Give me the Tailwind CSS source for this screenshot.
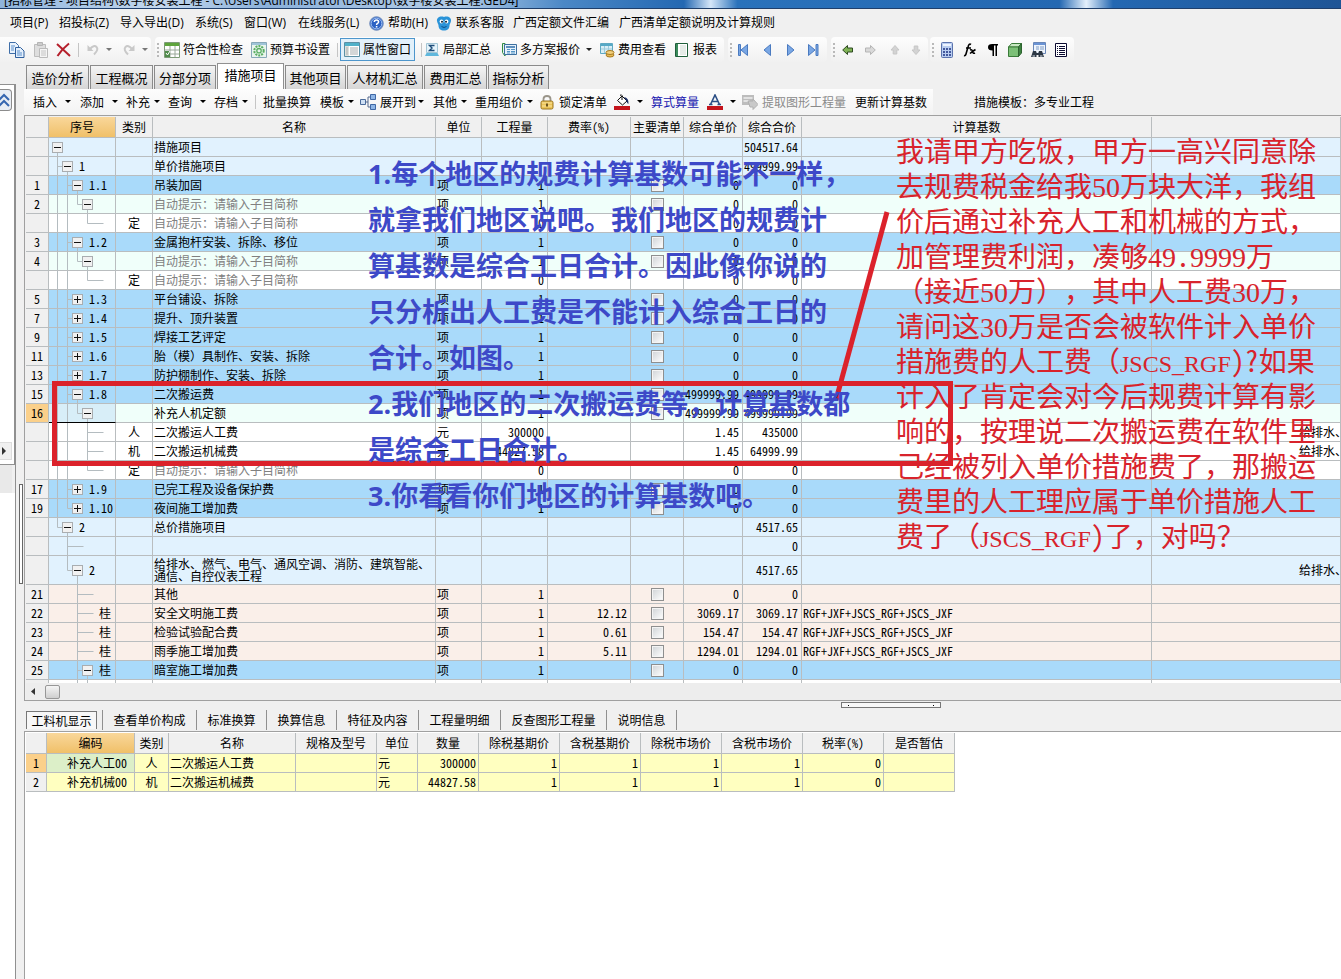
<!DOCTYPE html>
<html lang="zh-CN">
<head>
<meta charset="utf-8">
<title>招标管理 - 措施项目</title>
<script src="https://cdn.jsdelivr.net/npm/@tailwindcss/browser@4"></script>
</head>
<body class="relative flex h-screen flex-col overflow-hidden bg-[#f0f0f0] font-['Open_Sans','Noto_Sans_CJK_SC',sans-serif] text-xs text-black [text-spacing-trim:space-all]">

<!-- title bar -->
<header class="flex h-[9px] shrink-0 items-end overflow-hidden border-b border-[#1f3f6b] bg-[linear-gradient(90deg,#8fb4dc_0%,#c3d8ee_12%,#8ab0da_20%,#b4cde8_34%,#4b88c6_42%,#2468b2_51%,#d5e6f8_53%,#2a72bb_55%,#2468b2_79%,#e4f0fc_81%,#2468b2_83%,#1f5596_100%)] pl-1">
  <h1 class="whitespace-nowrap text-xs leading-[14px]">[招标管理 - 项目结构\数字楼安装工程 - C:\Users\Administrator\Desktop\数字楼安装工程.GED4]</h1>
</header>

<!-- menu -->
<nav class="flex h-7 shrink-0 items-center whitespace-nowrap pl-[10px] leading-4" aria-label="主菜单">
  <button class="w-[49px] text-left">项目(P)</button>
  <button class="w-[61px] text-left">招投标(Z)</button>
  <button class="w-[75px] text-left">导入导出(D)</button>
  <button class="w-[49px] text-left">系统(S)</button>
  <button class="w-[54px] text-left">窗口(W)</button>
  <button class="w-[71px] text-left">在线服务(L)</button>
  <button class="flex w-[67px] items-center gap-1"><svg class="size-[15px]" viewBox="0 0 15 15"><circle cx="7.5" cy="7.5" r="6.8" fill="#2c62c4" stroke="#7a93bd"/><circle cx="7.5" cy="7.5" r="5.4" fill="none" stroke="#a8c6f4"/><path d="M5.3 6Q5.4 4 7.5 4T9.6 6Q9.5 7 8.2 7.7Q7.6 8.1 7.6 9" fill="none" stroke="#fff" stroke-width="1.5"/><path d="M6.8 10h1.6v1.5H6.8z" fill="#fff"/></svg>帮助(H)</button>
  <button class="flex w-[77px] items-center gap-1"><svg class="size-4" viewBox="0 0 16 16"><path d="M8 2C12 .5 15.500 3 15 6C14.800 8 13.500 9 13.500 10.500C13.500 13.500 11.500 15.500 8 15.500S2.500 13.500 2.500 10.500C2.500 9 1.200 8 1 6C.5 3 4 .5 8 2Z" fill="#2a93d8"/><circle cx="5.500" cy="6.500" r="1.900" fill="#fff"/><circle cx="10.500" cy="6.500" r="1.900" fill="#fff"/><circle cx="6" cy="6.700" r="1" fill="#123"/><circle cx="10" cy="6.700" r="1" fill="#123"/><path d="M5.500 11.500Q8 13.500 10.500 11.500" stroke="#0d4f86" fill="none"/></svg>联系客服</button>
  <button class="w-[106px] text-left">广西定额文件汇编</button>
  <button class="text-left">广西清单定额说明及计算规则</button>
</nav>

<!-- main toolbar -->
<div class="flex h-[25px] shrink-0 items-stretch whitespace-nowrap leading-4" role="toolbar" aria-label="工具">
  <div class="flex items-center rounded-r bg-linear-to-b from-[#fdfdfd] to-[#f1f1f1] pl-[9px]">
    <button class="w-6" aria-label="复制"><svg class="size-4" viewBox="0 0 16 16"><path d="M.5.500h6l3 3v8h-9z" fill="#eaf3fd" stroke="#3f6ea8"/><path d="M6.500 5.500h5l3.500 3.500v6.500H6.500z" fill="#e3effc" stroke="#2f5f9d"/><path d="M2 4h4M2 6h3M2 8h3M8 9h3M8 11h5M8 13h5" stroke="#5b8fcb"/></svg></button>
    <button class="w-[23px]" aria-label="粘贴"><svg class="size-4" viewBox="0 0 16 16"><path d="M1.500 2.500h11v12h-11z" fill="#dedede" stroke="#bdbdbd"/><path d="M4.500.500h5v3h-5z" fill="#ccc" stroke="#b5b5b5"/><path d="M6.500 6.500h8v9h-8z" fill="#f5f5f5" stroke="#bbb"/><path d="M8 9h5M8 11h5M8 13h5" stroke="#c4c4c4"/></svg></button>
    <button class="w-[22px]" aria-label="删除"><svg class="size-4" viewBox="0 0 16 16"><path d="M1 2l13 12M13 1.500Q6 7 1.500 14" fill="none" stroke="#b5202c" stroke-width="2"/></svg></button>
    <span class="mr-[7px] h-3.5 w-px bg-[#c5c5c5]"></span>
    <button class="w-5" aria-label="撤销"><svg class="size-4" viewBox="0 0 16 16"><path d="M1.500 3v6h6z" fill="#c9c9c9"/><path d="M4 7Q8 2.500 10.500 5T8 12.500" fill="none" stroke="#c9c9c9" stroke-width="2"/></svg></button>
    <button class="w-4" aria-label="撤销列表"><svg class="h-1 w-[7px]" viewBox="0 0 7 4"><path d="M0 0h6L3 3z" fill="#777"/></svg></button>
    <button class="w-5" aria-label="恢复"><svg class="size-4" viewBox="0 0 16 16"><path d="M12.500 3v6h-6z" fill="#c9c9c9"/><path d="M10 7Q6 2.500 3.500 5T6 12.500" fill="none" stroke="#c9c9c9" stroke-width="2"/></svg></button>
    <button class="w-[9px]" aria-label="恢复列表"><svg class="h-1 w-[7px]" viewBox="0 0 7 4"><path d="M0 0h6L3 3z" fill="#777"/></svg></button>
  </div>
  <div class="ml-1 flex items-center rounded bg-linear-to-b from-[#fdfdfd] to-[#f1f1f1] pl-0.5">
    <svg class="mr-1 h-3.5 w-[3px]" viewBox="0 0 3 14"><path d="M0 0h2v2H0zM0 4h2v2H0zM0 8h2v2H0zM0 12h2v2H0z" fill="#b9b9b9"/></svg>
    <button class="flex w-[87px] items-center gap-[3px]"><svg class="size-4" viewBox="0 0 16 16"><path d="M.5.500h15v15H.5z" fill="#fff" stroke="#7d9a77"/><path d="M1 1h14v3H1z" fill="#5ea43c"/><path d="M1 8h14M1 12h14M6 4v11M11 4v11" stroke="#9aa89a"/><path d="M1 9h5v6H1z" fill="#4f8b4a"/><path d="M2 11l1.500 2L6 9" stroke="#fff" fill="none"/></svg>符合性检查</button>
    <button class="flex w-[86px] items-center gap-[3px]"><svg class="size-4" viewBox="0 0 16 16"><path d="M.5.500h15v15H.5z" fill="#e9f5ee" stroke="#87a8b8"/><path d="M1 1h14v2H1z" fill="#9fc4d8"/><circle cx="8" cy="8.700" r="4.700" fill="none" stroke="#5aae62" stroke-width="2" stroke-dasharray="2 1"/><circle cx="8" cy="8.700" r="2.200" fill="none" stroke="#5aae62" stroke-width="1.300"/></svg>预算书设置</button>
    <span class="mr-0.5 h-3.5 w-px bg-[#c5c5c5]"></span>
    <button class="flex h-[23px] w-[75px] items-center gap-[3px] border border-[#4d96cc] bg-[#e2f0fa] pl-[3px]"><svg class="h-[15px] w-4" viewBox="0 0 16 15"><path d="M.5.500h15v14H.5z" fill="#fff" stroke="#5a8fa5"/><path d="M1 1h14v3H1z" fill="#4fb1c9"/><path d="M1 4h4v10H1z" fill="#e0e0dc"/><path d="M2 6h2M2 8h2M2 10h2M2 12h2M6 6h8M6 8h8M6 10h8M6 12h8" stroke="#a7aeb0"/></svg>属性窗口</button>
    <span class="ml-1.5 mr-0.5 h-3.5 w-px bg-[#c5c5c5]"></span>
    <button class="flex w-[77px] items-center gap-[3px]"><svg class="size-4" viewBox="0 0 16 16"><path d="M2.500 1.500h11v9h-11z" fill="#e4f3fb" stroke="#a3c6d6"/><path d="M10.500 3.500h-5L8 6 5.500 8.500h5" fill="none" stroke="#1d4d7a" stroke-width="1.400"/><path d="M1 14h14l-1.500-3h-11z" fill="#5fb7dc"/></svg>局部汇总</button>
    <button class="flex w-[85px] items-center gap-[3px]"><svg class="size-4" viewBox="0 0 16 16"><path d="M4 1.500H1.500v9L4 14z" fill="#e7f5e8" stroke="#2f8a45"/><path d="M3.500 2.500h12v10h-12z" fill="#e6f1fb" stroke="#3c6f9f"/><path d="M5 5h9" stroke="#2f6ea8" stroke-width="1.500"/><path d="M6 7.500h3M10 7.500h4M6 9.500h3M10 9.500h4M6 11h3M10 11h4" stroke="#5595c5"/></svg>多方案报价</button>
    <button class="w-[13px]" aria-label="报价列表"><svg class="h-1 w-[7px]" viewBox="0 0 7 4"><path d="M0 0h6L3 3z" fill="#222"/></svg></button>
    <button class="flex w-[75px] items-center gap-[3px]"><svg class="size-4" viewBox="0 0 16 16"><path d="M1.500 1.500h12v10h-12z" fill="#d8eef6" stroke="#5fa9c2"/><path d="M2 2h11v2H2z" fill="#56a9c6"/><path d="M2 7h11M5.500 4v7M9.500 4v7" stroke="#9ccbdc"/><ellipse cx="11" cy="13" rx="4" ry="2" fill="#e7bb55" stroke="#a97c23"/><ellipse cx="11" cy="10.500" rx="4" ry="2" fill="#f1cf7d" stroke="#a97c23"/></svg>费用查看</button>
    <button class="flex w-[50px] items-center gap-[3px]"><svg class="size-4" viewBox="0 0 16 16"><path d="M1.500 1.500h12v13h-12z" fill="#fff" stroke="#1f5f3a"/><path d="M2 2h2v12H2z" fill="#3c8b5c"/><path d="M6 4h6M6 6h6M6 8h6M6 10h6M6 12h6" stroke="#ccd8d0"/></svg>报表</button>
  </div>
  <div class="ml-1 flex items-center rounded bg-linear-to-b from-[#fdfdfd] to-[#f1f1f1] pl-0.5">
    <svg class="mr-[5px] h-3.5 w-[3px]" viewBox="0 0 3 14"><path d="M0 0h2v2H0zM0 4h2v2H0zM0 8h2v2H0zM0 12h2v2H0z" fill="#b9b9b9"/></svg>
    <button class="w-6" aria-label="首条"><svg class="h-3 w-3" viewBox="0 0 12 12"><path d="M.5.500h2v11h-2zM9.500.500v11L3 6z" fill="#7aa7e4" stroke="#4a7ac0"/></svg></button>
    <button class="w-[23px]" aria-label="上一条"><svg class="h-3 w-3" viewBox="0 0 12 12"><path d="M8.500.500v11L2 6z" fill="#7aa7e4" stroke="#4a7ac0"/></svg></button>
    <button class="w-[22px]" aria-label="下一条"><svg class="h-3 w-3" viewBox="0 0 12 12"><path d="M2.500.500v11L9 6z" fill="#7aa7e4" stroke="#4a7ac0"/></svg></button>
    <button class="w-5" aria-label="末条"><svg class="h-3 w-3" viewBox="0 0 12 12"><path d="M9 .5h2v11H9zM1.500.500v11L8 6z" fill="#7aa7e4" stroke="#4a7ac0"/></svg></button>
  </div>
  <div class="ml-1 flex items-center rounded bg-linear-to-b from-[#fdfdfd] to-[#f1f1f1] pl-0.5">
    <svg class="mr-1.5 h-3.5 w-[3px]" viewBox="0 0 3 14"><path d="M0 0h2v2H0zM0 4h2v2H0zM0 8h2v2H0zM0 12h2v2H0z" fill="#b9b9b9"/></svg>
    <button class="w-[22px]" aria-label="左移"><svg class="h-3 w-3" viewBox="0 0 12 12"><path d="M.7 6L5.500 1.500v2.500h5v4h-5v2.500z" fill="#7fb255" stroke="#2e4a22"/></svg></button>
    <button class="w-[25px]" aria-label="右移"><svg class="h-3 w-3" viewBox="0 0 12 12"><path d="M11.300 6L6.500 1.500v2.500h-5v4h5v2.500z" fill="#d9d9d9" stroke="#b5b5b5"/></svg></button>
    <button class="w-[21px]" aria-label="上移"><svg class="h-3 w-3" viewBox="0 0 12 12"><path d="M6 1.500L2 6h2.200v4h3.600V6H10z" fill="#d3d3d3" stroke="#c6c6c6"/></svg></button>
    <button class="w-[18px]" aria-label="下移"><svg class="h-3 w-3" viewBox="0 0 12 12"><path d="M6 10.500L2 6h2.200V2h3.600v4H10z" fill="#d3d3d3" stroke="#c6c6c6"/></svg></button>
  </div>
  <div class="ml-0.5 flex items-center rounded bg-linear-to-b from-[#fdfdfd] to-[#f1f1f1] pl-0.5">
    <svg class="mr-1 h-3.5 w-[3px]" viewBox="0 0 3 14"><path d="M0 0h2v2H0zM0 4h2v2H0zM0 8h2v2H0zM0 12h2v2H0z" fill="#b9b9b9"/></svg>
    <button class="w-[23px]" aria-label="计算器"><svg class="size-4" viewBox="0 0 16 16"><rect x="2.500" y=".5" width="11" height="15" rx="1" fill="#b9cdf0" stroke="#5b73ad"/><path d="M4 2h8v2H4z" fill="#eef4ff"/><path d="M4 6h2v2H4zM7 6h2v2H7zM10 6h2v2h-2zM4 9h2v2H4zM7 9h2v2H7zM10 9h2v2h-2zM4 12h2v2H4zM7 12h2v2H7zM10 12h2v2h-2z" fill="#43589c"/></svg></button>
    <button class="w-[23px]" aria-label="函数"><svg class="size-4" viewBox="0 0 16 16"><path d="M9 2.500Q7 1 6 5L4 12Q3.500 14 2 13.500M4 6h5M8 8q2-1 2.500 1.500t2.500 1.500M13.500 7.500Q11 9 8 11.500" fill="none" stroke="#000" stroke-width="1.600"/></svg></button>
    <button class="w-[22px]" aria-label="段落"><svg class="size-4" viewBox="0 0 16 16"><path d="M7.500 2H13v1.500h-1V14h-1.500V3.500H9V14H7.500V8.500Q3 8.500 3 5.200T7.500 2z"/></svg></button>
    <button class="w-[23px]" aria-label="三维"><svg class="size-4" viewBox="0 0 16 16"><path d="M1.500 5l3-3.500h10l-3 3.500z" fill="#c8e8c2" stroke="#3a7a39"/><path d="M1.500 5h10v9.500h-10z" fill="#7cc077" stroke="#3a7a39"/><path d="M11.500 5l3-3.500v9.500l-3 3.500z" fill="#3d8240" stroke="#2e6430"/></svg></button>
    <button class="w-6" aria-label="查找"><svg class="size-4" viewBox="0 0 16 16"><path d="M3.500.500h12v11h-12z" fill="#eef4fc" stroke="#6b88b8"/><path d="M4 1h11v2H4z" fill="#6a93d4"/><path d="M6 5h3M10 5h4M6 7h3M10 7h4" stroke="#7f9cc5"/><path d="M3 9h3l.7 2h1.600L9 9h3l2 6H8.500v-2h-2v2H1z" fill="#2c3744"/><path d="M2.500 14h2.500M10 14h2.500" stroke="#dfe6ee"/></svg></button>
    <button class="w-5" aria-label="列表"><svg class="size-3.5" viewBox="0 0 14 14"><path d="M1.500.500h11v13h-11z" fill="#fff" stroke="#0a0a30"/><path d="M3 3.500h1M5 3.500h6M3 5.500h1M5 5.500h6M3 7.500h1M5 7.500h6M3 9.500h1M5 9.500h6M3 11.500h1M5 11.500h6" stroke="#0a0a30"/></svg></button>
  </div>
</div>

<div class="flex min-h-0 flex-1">
  <!-- collapsed side panel -->
  <aside class="mt-[22px] flex w-4 shrink-0 flex-col border-r border-t border-[#909090]">
    <div class="flex h-[380px] flex-col border-b border-r border-[#909090] bg-white">
      <button class="mt-1 h-[22px] w-3 rounded-r border border-l-0 border-[#8c8c8c] bg-[#e8edf4]" aria-label="收起"><svg class="h-4 w-3" viewBox="0 0 12 16"><path d="M-1 8l5-5 5 5M-1 14l5-5 5 5" fill="none" stroke="#3566b0" stroke-width="2"/></svg></button>
      <span class="flex-1"></span>
      <button class="flex h-[18px] w-3 items-center border-y border-r border-[#ddd] bg-[#f0f0f0] pl-0.5" aria-label="向右滚动"><svg class="h-2 w-1" viewBox="0 0 4 8"><path d="M0 0v8l4-4z" fill="#333"/></svg></button>
      <span class="h-1"></span>
    </div>
    <div class="h-7 w-3 bg-[#e9e9e9]"></div>
    <div class="flex-1 bg-white"></div>
  </aside>
  <div class="flex w-2 shrink-0 flex-col pl-[3px]">
    <div class="mt-[422px] h-[100px] w-1 border border-[#666] bg-white"></div>
  </div>

  <main class="flex min-w-0 flex-1 flex-col font-['Noto_Sans_CJK_SC',sans-serif]">
    <!-- page tabs -->
    <div id="tabs" class="flex h-[27px] shrink-0 items-end gap-px whitespace-nowrap pl-0.5 text-[13px] leading-4" role="tablist"></div>

    <!-- grid toolbar -->
    <div class="flex h-[26px] shrink-0 items-stretch whitespace-nowrap leading-4" role="toolbar" aria-label="措施操作">
      <div id="tools" class="flex items-center bg-linear-to-b from-[#fdfdfd] to-[#f3f3f3] pl-[9px]"></div>
      <p class="flex items-center pl-[41px]">措施模板：多专业工程</p>
    </div>

    <!-- measures grid -->
    <section class="flex h-[586px] shrink-0 flex-col overflow-hidden border-b border-l border-t border-[#a0a0a0] pl-px pt-px [font-feature-settings:'hwid']">
      <div class="h-[566px] overflow-hidden bg-white">
        <table class="w-full table-fixed border-separate border-spacing-0 leading-4">
          <colgroup><col class="w-[23px]"><col class="w-[67px]"><col class="w-[37px]"><col class="w-[283px]"><col class="w-[46px]"><col class="w-[66px]"><col class="w-[83px]"><col class="w-[53px]"><col class="w-[59px]"><col class="w-[59px]"><col class="w-[350px]"><col></colgroup>
          <thead id="gridHead"></thead>
          <tbody id="gridBody"></tbody>
        </table>
      </div>
      <div class="flex flex-1 items-center bg-[#ededed] pl-1">
        <button class="w-[15px]" aria-label="向左滚动"><svg class="ml-px h-[7px] w-1" viewBox="0 0 4 7"><path d="M4 0v7L0 3.500z" fill="#333"/></svg></button>
        <button class="h-3.5 w-[15px] rounded-xs border border-[#979797] bg-linear-to-b from-[#f5f5f5] to-[#cfcfcf]" aria-label="滚动块"></button>
      </div>
    </section>

    <!-- horizontal splitter -->
    <div class="flex h-2 shrink-0 items-center pl-[817px]"><div class="flex h-1.5 w-[100px] items-center justify-between border border-[#777] bg-[#f8f8f8] px-1.5"><i class="size-px bg-black"></i><i class="size-px bg-black"></i></div></div>

    <div id="subtabs" class="flex h-[22px] shrink-0 items-center whitespace-nowrap pl-[2px] leading-4" role="tablist"></div>

    <!-- resource grid -->
    <section class="flex-1 border-l border-t border-[#a0a0a0] bg-white pl-px pt-px [font-feature-settings:'hwid']">
      <table class="w-[929px] table-fixed border-separate border-spacing-0 leading-4">
        <colgroup><col class="w-[21px]"><col class="w-[88px]"><col class="w-[34px]"><col class="w-[127px]"><col class="w-[81px]"><col class="w-[41px]"><col class="w-[61px]"><col class="w-[81px]"><col class="w-[81px]"><col class="w-[81px]"><col class="w-[81px]"><col class="w-[81px]"><col class="w-[71px]"></colgroup>
        <thead id="resHead"></thead>
        <tbody id="resBody"></tbody>
      </table>
    </section>
  </main>
</div>

<!-- annotations lying over the window -->
<svg class="pointer-events-none absolute left-0 top-0 h-[560px] w-[1341px]" viewBox="0 0 1341 560"><path d="M54.500 383.500h896v80h-896z" fill="none" stroke="#db222b" stroke-width="5"/><path d="M887 212L836 400" stroke="#db222b" stroke-width="5"/></svg>
<p class="pointer-events-none absolute left-[368px] top-[151px] whitespace-nowrap text-[27px] font-bold leading-[46px] text-[#3d49c8]">1.每个地区的规费计算基数可能不一样，<br>就拿我们地区说吧。我们地区的规费计<br>算基数是综合工日合计。因此像你说的<br>只分析出人工费是不能计入综合工日的<br>合计。如图。<br>2.我们地区的二次搬运费等，计算基数都<br>是综合工日合计。<br>3.你看看你们地区的计算基数吧。</p>
<p id="note" class="pointer-events-none absolute left-[896px] top-[133px] whitespace-nowrap font-['Noto_Sans_CJK_SC',sans-serif] text-[28px] leading-[35px] text-[#d8232c]"></p>

<script>
const byId = id => document.getElementById(id);

// red note: Latin runs are set in a serif face, ASCII punctuation in half-width forms
const note = ['我请甲方吃饭，甲方一高兴同意除','去规费税金给我50万块大洋，我组','价后通过补充人工和机械的方式，','加管理费利润，凑够49.9999万','（接近50万），其中人工费30万，','请问这30万是否会被软件计入单价','措施费的人工费（JSCS_RGF)?如果','计入了肯定会对今后规费计算有影','响的，按理说二次搬运费在软件里','己经被列入单价措施费了，那搬运','费里的人工理应属于单价措施人工','费了（JSCS_RGF)了，对吗？'];
byId('note').innerHTML = note.map(t => t.replace(/([0-9]+)|([A-Z_]+)|([.)?]+)/g, (m, d, a) =>
  d ? `<span class="font-['Liberation_Serif',serif] leading-none">${m}</span>`
  : a ? `<span class="font-['Liberation_Serif',serif] text-2xl leading-none">${m}</span>`
  : `<span class="[font-feature-settings:'hwid']">${m}</span>`)).join('<br>');

// page tabs: label, width class
const tabs = [['造价分析','w-[63px]'],['工程概况','w-[63px]'],['分部分项','w-[62px]'],['措施项目','w-[67px]'],['其他项目','w-[61px]'],['人材机汇总','w-[76px]'],['费用汇总','w-[63px]'],['指标分析','w-[61px]']];
byId('tabs').innerHTML = tabs.map(([t, w], i) => i === 3
  ? `<button role="tab" aria-selected="true" class="${w} h-[26px] border border-b-0 border-[#909090] bg-white pb-1">${t}</button>`
  : `<button role="tab" class="${w} h-6 border border-b-0 border-[#8a8a8a] bg-linear-to-b from-[#f4f4f4] to-[#d6d6d6]">${t}</button>`).join('');

// grid toolbar
const drop = w => `<button class="${w} text-left" aria-label="展开"><svg class="h-1 w-[7px]" viewBox="0 0 7 4"><path d="M0 0h6L3 3z"/></svg></button>`;
const word = (t, w, c = '') => `<button class="${w} ${c} text-left">${t}</button>`;
const pic = (svg, w, label) => `<button class="${w}" aria-label="${label}"><svg class="size-4" viewBox="0 0 16 16">${svg}</svg></button>`;
byId('tools').innerHTML =
  word('插入','w-8') + drop('w-[15px]') + word('添加','w-8') + drop('w-3.5') + word('补充','w-7') + drop('w-3.5') +
  word('查询','w-8') + drop('w-3.5') + word('存档','w-7') + drop('w-[13px]') +
  '<span class="mr-[7px] h-3.5 w-px bg-[#c5c5c5]"></span>' +
  word('批量换算','w-[57px]') + word('模板','w-7') + drop('w-3') +
  pic('<path d="M5 8h3M8 3v10M8 3h3M8 13h3" stroke="#55688c" fill="none"/><path d="M.5 5.500h5v5h-5z" fill="#cfe0f4" stroke="#4b6b9b"/><path d="M10.500.500h5v5h-5z" fill="#8fb6e6" stroke="#3f68a5"/><path d="M10.500 10.500h5v5h-5z" fill="#8fb6e6" stroke="#3f68a5"/>','w-5','展开层级') +
  word('展开到','w-[38px]') + drop('w-[15px]') + word('其他','w-7') + drop('w-3.5') + word('重用组价','w-[52px]') + drop('w-3') +
  pic('<path d="M4.500 8V5Q4.500 2 8 2t3.500 3v3" fill="none" stroke="#9a958a" stroke-width="1.800"/><rect x="2" y="7" width="12" height="8" rx="1.500" fill="#ecc457" stroke="#9a7420"/><path d="M3 9h10M3 12h10" stroke="#f9e3a0"/><path d="M7 9.500h2v3H7z" fill="#6d5218"/>','w-5','锁定') +
  word('锁定清单','w-[55px]') +
  pic('<path d="M0 12h16v4H0z" fill="#c4131b"/><path d="M3.500 6.500L8 2l5 5-4.500 4z" fill="#fff" stroke="#111"/><path d="M8 6V1.500Q7.500 0 6 1.500" stroke="#111" fill="none"/><path d="M10 3Q15 4 14.500 10Q13 9.500 12.500 7z" fill="#1c2f66"/>','w-[23px]','填充颜色') +
  drop('w-3.5') + word('算式算量','w-14','text-[#1616b0]') +
  pic('<path d="M0 12h16v4H0z" fill="#c4131b"/><path d="M3.500 10.500L8 1l4.500 9.500M5 7.500h6M2 10.500h3.500M10.500 10.500H14" fill="none" stroke="#2c4f86" stroke-width="1.600"/>','w-[23px]','字体颜色') +
  drop('w-3') +
  pic('<path d="M0 1h12v10H0z" fill="#bdbdbd"/><path d="M1.500 4h9M1.500 7h6" stroke="#eee" stroke-width="1.500"/><path d="M6 7h5V5l5 5.500-5 5V13H8z" fill="#c9c9c9" stroke="#b0b0b0"/>','w-5','提取') +
  word('提取图形工程量','w-[93px]','text-[#8a8a8a]') + word('更新计算基数','w-[78px]');

// lower tabs
const sub = [['查看单价构成','w-[94px]'],['标准换算','w-[70px]'],['换算信息','w-[70px]'],['特征及内容','w-[82px]'],['工程量明细','w-[82px]'],['反查图形工程量','w-[106px]'],['说明信息','w-[70px]']];
byId('subtabs').innerHTML = '<button role="tab" aria-selected="true" class="mr-[5px] h-[18px] w-[71px] border border-b-0 border-[#777] bg-[#f7f7f7] pt-px">工料机显示</button><span class="h-5 w-px bg-[#909090]"></span>' +
  sub.map(([t, w]) => `<button role="tab" class="${w} h-5 border-r border-[#909090]">${t}</button>`).join('');

// outline column: v = full verticals, e = elbow from above, t = tick on a full vertical, b = box, s = sign, d = vertical below the box
const X = l => 8.5 + l * 10;
function outline(n, h) {
  const m = (h / 2 | 0) + .5, p = [];
  (n.v || []).forEach(l => p.push(`M${X(l)} 0V${h}`));
  const end = n.b === undefined ? X(n.e ?? n.t) + 16 : X(n.b);
  if (n.e !== undefined) p.push(`M${X(n.e)} 0V${m}H${end}`);
  if (n.t !== undefined) p.push(`M${X(n.t)} 0V${h}M${X(n.t)} ${m}H${end}`);
  if (n.d) p.push(`M${X(n.b)} ${m}V${h}`);
  let s = `<path d="${p.join('')}" fill="none" stroke="#b4bcc0"/>`;
  if (n.b !== undefined) {
    const x = X(n.b);
    s += `<rect x="${x - 5}" y="${m - 5}" width="10" height="10" fill="#f1f1f1" stroke="#a9adb0"/><path d="M${x - 3.5} ${m}h7${n.s === '+' ? `M${x} ${m - 3.5}v7` : ''}" stroke="#111"/>`;
  }
  const w = n.w || 50;
  return `<div class="flex items-center overflow-hidden"><svg class="shrink-0" width="${w}" height="${h}" viewBox="0 0 ${w} ${h}">${s}</svg><span>${n.l || ''}</span></div>`;
}
const BG = {L:'bg-[#e1f2fe]', B:'bg-[#a9dafa]', M:'bg-[#f0fffa]', W:'bg-white', P:'bg-[#faefe9]'};
const root = {b:0,d:1,w:20};
const lv2 = (l, s = '+') => ({v:[0],t:1,b:2,s,l,w:40,d:s === '-'});
const lv3 = {v:[0,1],e:2,b:3,d:1};
const leaf = {v:[0,1],e:3,w:60}, mid = {v:[0,1],t:3,w:60};
const hint = '自动提示：请输入子目简称';
const water = '给排水、燃气';
// row number, background, outline, kind, name, unit, quantity, rate, checkbox, unit price, total, base, profession
const rows = [
 ['','L',root,'','措施项目','','','',0,'','504517.64','',''],
 ['','L',{t:0,b:1,d:1,l:'1',w:30},'','单价措施项目','','','',0,'','499999.99','',''],
 [1,'B',lv2('1.1','-'),'','吊装加固','项','1','',1,'0','0','',''],
 [2,'M',lv3,'',hint,'项','1','',1,'0','0','',''],
 ['','W',leaf,'定',hint,'','0','',0,'0','0','',''],
 [3,'B',lv2('1.2','-'),'','金属抱杆安装、拆除、移位','项','1','',1,'0','0','',''],
 [4,'M',lv3,'',hint,'项','1','',1,'0','0','',''],
 ['','W',leaf,'定',hint,'','0','',0,'0','0','',''],
 [5,'B',lv2('1.3'),'','平台铺设、拆除','项','1','',1,'0','0','',''],
 [7,'B',lv2('1.4'),'','提升、顶升装置','项','1','',1,'0','0','',''],
 [9,'B',lv2('1.5'),'','焊接工艺评定','项','1','',1,'0','0','',''],
 [11,'B',lv2('1.6'),'','胎（模）具制作、安装、拆除','项','1','',1,'0','0','',''],
 [13,'B',lv2('1.7'),'','防护棚制作、安装、拆除','项','1','',1,'0','0','',''],
 [15,'B',lv2('1.8','-'),'','二次搬运费','项','1','',1,'499999.99','499999.99','',''],
 [16,'M',lv3,'','补充人机定额','项','1','',1,'499999.99','499999.99','',''],
 ['','W',mid,'人','二次搬运人工费','元','300000','',0,'1.45','435000','',water],
 ['','W',mid,'机','二次搬运机械费','元','44827.58','',0,'1.45','64999.99','',water],
 ['','W',leaf,'定',hint,'','0','',0,'0','0','',''],
 [17,'B',lv2('1.9'),'','已完工程及设备保护费','项','1','',1,'0','0','',''],
 [19,'B',{v:[0],e:1,b:2,s:'+',l:'1.10',w:40},'','夜间施工增加费','项','1','',1,'0','0','',''],
 ['','L',{e:0,b:1,d:1,l:'2',w:30},'','总价措施项目','','','',0,'','4517.65','',''],
 ['','L',{t:1},'','','','','',0,'','0','',''],
 ['','L',{e:1,b:2,d:1,l:'2',w:40},'','给排水、燃气、电气、通风空调、消防、建筑智能、<br>通信、自控仪表工程','','','',0,'','4517.65','',water],
 [21,'P',{t:2},'','其他','项','1','',1,'0','0','',''],
 [22,'P',{t:2,l:'桂'},'','安全文明施工费','项','1','12.12',1,'3069.17','3069.17','RGF+JXF+JSCS_RGF+JSCS_JXF',''],
 [23,'P',{t:2,l:'桂'},'','检验试验配合费','项','1','0.61',1,'154.47','154.47','RGF+JXF+JSCS_RGF+JSCS_JXF',''],
 [24,'P',{t:2,l:'桂'},'','雨季施工增加费','项','1','5.11',1,'1294.01','1294.01','RGF+JXF+JSCS_RGF+JSCS_JXF',''],
 [25,'B',{t:2,b:3,d:1,l:'桂'},'','暗室施工增加费','项','1','',1,'0','0','',''],
 ['','W',{v:[2,3]},'','','','','',0,'','','','']
];
byId('gridHead').innerHTML = '<tr>' + ['','序号','类别','名称','单位','工程量','费率(%)','主要清单','综合单价','综合合价','计算基数',''].map((t, i) =>
  `<th scope="col" class="h-[21px] overflow-hidden whitespace-nowrap border-b border-r border-[#b9bdbf] p-0 font-normal ${i === 1 ? 'bg-linear-to-b from-[#f9d79a] to-[#f0c068]' : 'bg-[#f0f0f0]'}">${t}</th>`).join('') + '</tr>';
byId('gridBody').innerHTML = rows.map(r => {
  const [no, bg, tree, kind, name, unit, qty, rate, chk, price, total, base, prof] = r;
  const tall = name.includes('<br>');
  const td = (html, c) => `<td class="${tall ? 'h-[29px]' : 'h-[19px]'} overflow-hidden whitespace-nowrap border-b border-r border-[#b9bdbf] p-0 ${c}">${html}</td>`;
  const f = BG[bg], num = f + ' pr-[3px] text-right', sel = no === 16;
  return '<tr>' + td(no, 'text-center ' + (sel ? 'bg-[#fbd08a]' : 'bg-[#f0f0f0]')) +
    td(outline(tree, tall ? 28 : 18), sel ? 'bg-[#d8eef8] border-b-black' : f) +
    td(kind, f + ' text-center') +
    td(name, f + ' pl-px [font-feature-settings:normal]' + (tall ? ' leading-3' : '') + (name === hint ? ' text-[#808080]' : '')) +
    td(unit, f + ' pl-px') + td(qty, num) + td(rate, num) +
    td(chk ? `<input type="checkbox" aria-label="主要清单 ${no}" class="mx-auto block size-[13px] appearance-none border border-[#8e8f8f] bg-linear-to-br from-[#cfd3d6] to-white shadow-[inset_0_0_0_1px_#f4f4f4]">` : '', f) +
    td(price, num) + td(total, num) + td(base, f + ' pl-px') + td(prof, f + ' pl-[147px]') + '</tr>';
}).join('');

// resource grid
byId('resHead').innerHTML = '<tr>' + ['','编码','类别','名称','规格及型号','单位','数量','除税基期价','含税基期价','除税市场价','含税市场价','税率(%)','是否暂估'].map((t, i) =>
  `<th scope="col" class="h-[21px] whitespace-nowrap border-b border-r border-[#b9bdbf] p-0 font-normal ${i === 1 ? 'bg-linear-to-b from-[#f9d79a] to-[#f0c068]' : 'bg-[#f0f0f0]'}">${t}</th>`).join('') + '</tr>';
const res = [[1,'补充人工00','人','二次搬运人工费','','元','300000','1','1','1','1','0',''],[2,'补充机械00','机','二次搬运机械费','','元','44827.58','1','1','1','1','0','']];
byId('resBody').innerHTML = res.map((r, n) => '<tr>' + r.map((t, i) => {
  const c = i === 0 ? (n ? 'bg-[#f0f0f0] text-center' : 'bg-[#fbd08a] text-center')
    : i === 1 ? (n ? 'bg-[#ffffc0] pr-[7px] text-right' : 'bg-[#dcefc8] pr-[7px] text-right')
    : i === 2 ? 'bg-[#ffffc0] text-center' : i < 6 ? 'bg-[#ffffc0] pl-px' : 'bg-[#ffffc0] pr-0.5 text-right';
  return `<td class="h-[19px] whitespace-nowrap border-b border-r border-[#b9bdbf] p-0 ${c}">${t}</td>`;
}).join('') + '</tr>').join('');
</script>
</body>
</html>
